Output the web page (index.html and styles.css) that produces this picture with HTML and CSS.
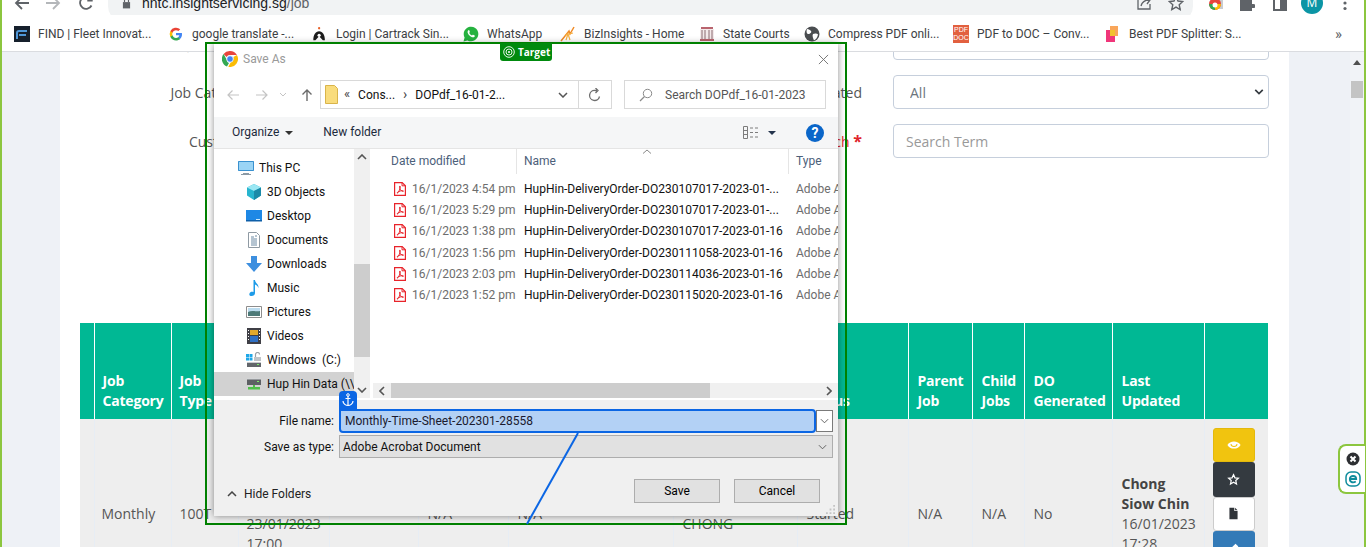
FILE: index.html
```html
<!DOCTYPE html>
<html lang="en">
<head>
    <meta charset="UTF-8">
    <title>Job</title>
    <link rel="stylesheet" href="styles.css">
</head>
<body>

    <svg width="0" height="0" class="defs">
        <symbol id="pdf" viewBox="0 0 12 14">
            <path d="M.6.6h7.6l3.2 3.2v9.6H.6z" fill="#fff" stroke="#e8232a" stroke-width="1.2"/>
            <path d="M8 .8v3h3" fill="none" stroke="#e8232a"/>
            <path d="M6 4c-.8 0-.6 2 .4 3.4C7.4 9 8.6 9.8 9.4 9.2 9.8 8.6 7.8 8.4 6 9c-1.400.5-2.800 1.600-3 1.800-.3.500.8.400 1.600-1C5.200 8.600 7 5 6 4z" fill="none" stroke="#e8232a"/>
        </symbol>
    </svg>

    <div class="app">
        <div class="toolbar">
            <div class="toolbar-inner">
                <svg class="tb-icon tb-back" viewBox="0 0 16 16"><path d="M15 8H2M8 2 2 8l6 6" fill="none" stroke="#5f6368" stroke-width="1.8"/></svg>
                <svg class="tb-icon tb-next" viewBox="0 0 16 16"><path d="M1 8h13M8 2l6 6-6 6" fill="none" stroke="#b4b7ba" stroke-width="1.8"/></svg>
                <svg class="tb-icon tb-reload" viewBox="0 0 16 16"><path d="M13.5 10.5A6 6 0 1 1 13 4.5M13.8 1v4.500H9.300" fill="none" stroke="#5f6368" stroke-width="1.8"/></svg>
                <div class="omnibox">
                    <svg class="lock" viewBox="0 0 10 12"><path d="M1 5h8v7H1z" fill="#5f6368"/><path d="M2.800 5V3a2.200 2.200 0 0 1 4.400 0v2" fill="none" stroke="#5f6368" stroke-width="1.3"/></svg>
                    <span class="url">hntc.insightservicing.sg<span class="url-path">/job</span></span>
                    <svg class="tb-icon om-share" viewBox="0 0 16 16"><path d="M8 2H2v12h12V9M5 11c1-4 4-6 8-6M10 2l4 3-3 4" fill="none" stroke="#5f6368" stroke-width="1.3"/></svg>
                    <svg class="tb-icon om-star" viewBox="0 0 16 16"><path d="m8 1.500 2 4.500 4.800.5-3.600 3.200 1 4.800L8 12.100 3.800 14.500l1-4.800L1.200 6.500 6 6z" fill="none" stroke="#5f6368" stroke-width="1.4"/></svg>
                </div>
                <svg class="tb-icon tb-ext" viewBox="0 0 16 16"><path d="M5 1h10v13H5z" fill="#c9ccd0"/><circle cx="7" cy="9" r="6" fill="#e8453c"/><path d="M7 9h6a6 6 0 0 1-6 6z" fill="#fbbc05"/><path d="M1 9h6v6a6 6 0 0 1-6-6z" fill="#34a853"/><circle cx="7" cy="10" r="2.500" fill="#fff"/></svg>
                <svg class="tb-icon tb-puzzle" viewBox="0 0 16 16"><path d="M1 5h4V3.500a2 2 0 0 1 4 0V5h4v4h1.500a2 2 0 0 1 0 4H13v3H1z" fill="#5f6368"/></svg>
                <svg class="tb-icon tb-window" viewBox="0 0 16 16"><path d="M2 1h12v14H2z" fill="none" stroke="#5f6368" stroke-width="2"/><path d="M8 1h6v14H8z" fill="#5f6368"/></svg>
                <div class="avatar">M</div>
                <svg class="tb-dots" viewBox="0 0 4 16"><circle cx="2" cy="2.500" r="1.600"/><circle cx="2" cy="8" r="1.600"/><circle cx="2" cy="13.500" r="1.600"/></svg>
            </div>
        </div>

        <div class="bookmarks">
            <div class="bm">
                <svg class="bm-icon" viewBox="0 0 16 16"><path d="M0 0h16v16H0z" fill="#16202c"/><path d="M3 13V7q0-2 2-2h8M5 9h7" fill="none" stroke="#4f97d8" stroke-width="2"/></svg>
                <span>FIND | Fleet Innovat...</span>
            </div>
            <div class="bm">
                <svg class="bm-icon" viewBox="-2 -2 20 20"><path d="M15.500 8.200c0-.6 0-1.100-.2-1.600H8v3h4.200a3.600 3.600 0 0 1-1.500 2.400v2h2.500c1.500-1.400 2.300-3.400 2.300-5.800z" fill="#4285f4"/><path d="M8 16c2.100 0 3.900-.7 5.200-1.900l-2.500-2c-.7.500-1.600.8-2.700.8-2.100 0-3.800-1.400-4.400-3.300H1v2A8 8 0 0 0 8 16z" fill="#34a853"/><path d="M3.600 9.600a4.800 4.800 0 0 1 0-3.200v-2H1a8 8 0 0 0 0 7.200z" fill="#fbbc05"/><path d="M8 3.200c1.200 0 2.200.4 3 1.200l2.300-2.300A8 8 0 0 0 1 4.400l2.600 2C4.200 4.600 5.900 3.200 8 3.200z" fill="#ea4335"/></svg>
                <span>google translate -...</span>
            </div>
            <div class="bm">
                <svg class="bm-icon" viewBox="-2 0 18 16"><circle cx="6" cy="1.500" r="1.300" fill="#e8622a"/><path d="M-.5 15C-.5 9 2 5 6 5s6.500 4 6.500 10h-2.300L6 10.500 1.800 15z" fill="#1d1d1d"/><circle cx="6" cy="9.500" r="1.800" fill="#fff"/></svg>
                <span>Login | Cartrack Sin...</span>
            </div>
            <div class="bm">
                <svg class="bm-icon" viewBox="0 0 16 16"><path d="M.5 15.500 1.600 11.500A7.300 7.300 0 1 1 4.500 14.400z" fill="#25b23f"/><path d="M5.500 4.200c-.8.500-1.200 1.600-.7 2.800.8 2 2.300 3.400 4.200 4.200 1.200.4 2.200 0 2.700-.8.300-.6.200-.9-.1-1l-1.500-.7c-.3-.1-.5 0-.6.200l-.5.600c-1.300-.5-2.200-1.400-2.800-2.700l.5-.5c.2-.2.200-.4.100-.6l-.6-1.400c-.2-.3-.4-.3-.7-.1z" fill="#fff"/></svg>
                <span>WhatsApp</span>
            </div>
            <div class="bm">
                <svg class="bm-icon" viewBox="0 0 16 16"><path d="M1 15 9 5l1 3 4-7" fill="none" stroke="#f08a24" stroke-width="1.5"/><path d="M6 14l2-6 2 6M5 9l8-2" fill="none" stroke="#f5b041" stroke-width="1.2"/></svg>
                <span>BizInsights - Home</span>
            </div>
            <div class="bm">
                <svg class="bm-icon" viewBox="0 0 16 16"><path d="M1 3h14v12H1z" fill="#f3e9ea"/><path d="M2 1h12v2H2zM1 13h14v2H1z" fill="#b9646e"/><path d="M3 4v9M6 4v9M10 4v9M13 4v9" stroke="#8a6b70"/></svg>
                <span>State Courts</span>
            </div>
            <div class="bm">
                <svg class="bm-icon" viewBox="0 0 16 16"><circle cx="8" cy="8" r="7.500" fill="#4a4d50"/><path d="M3 3c2 0 3 1 4 2S6 8 4.500 8 2 6 3 3zM9 8c2-1 4-.5 5 .5-.5 3-2 5-4 6-1-2-2-5-1-6.500z" fill="#fff"/></svg>
                <span>Compress PDF onli...</span>
            </div>
            <div class="bm">
                <div class="pdfdoc">PDF<br>DOC</div>
                <span>PDF to DOC – Conv...</span>
            </div>
            <div class="bm">
                <svg class="bm-icon" viewBox="0 0 16 16"><path d="M1 4h9v12H1z" fill="#f0367a"/><path d="M5 0h8v10H5z" fill="#f9a65a"/><path d="M5 4h5v6H5z" fill="#f2c230"/></svg>
                <span>Best PDF Splitter: S...</span>
            </div>
            <div class="bm-more">»</div>
        </div>

        <div class="viewport">
            <div class="scroll-view">
                <div class="card">
                    <div class="filters">
                        <label class="f-label">Job Status</label>
                        <div class="select-wrap"><input class="f-input" type="text"></div>
                        <label class="f-label">Job Number</label>
                        <div class="select-wrap"><input class="f-input" type="text"></div>

                        <label class="f-label">Job Category</label>
                        <div class="select-wrap">
                            <select class="f-input f-select"><option>All</option></select>
                            <svg class="chev" viewBox="0 0 12 8"><path d="M1.500 1.500 6 6l4.500-4.500" fill="none" stroke="#343a40" stroke-width="2"/></svg>
                        </div>
                        <label class="f-label">DO Generated</label>
                        <div class="select-wrap">
                            <select class="f-input f-select"><option>All</option></select>
                            <svg class="chev" viewBox="0 0 12 8"><path d="M1.500 1.500 6 6l4.500-4.500" fill="none" stroke="#343a40" stroke-width="2"/></svg>
                        </div>

                        <label class="f-label">Customer</label>
                        <div class="select-wrap"><input class="f-input" type="text"></div>
                        <label class="f-label f-required">Search <b>*</b></label>
                        <div class="select-wrap"><input class="f-input" type="text" placeholder="Search Term"></div>
                    </div>

                    <table class="jobs">
                        <colgroup>
                            <col class="c14"><col class="c77"><col class="c67"><col class="c91"><col class="c89"><col class="c90"><col class="c165"><col class="c124"><col class="c111"><col class="c64"><col class="c52"><col class="c88"><col class="c92"><col class="c64">
                        </colgroup>
                        <thead>
                            <tr>
                                <th></th>
                                <th>Job Category</th>
                                <th>Job Type</th>
                                <th>Due Date</th>
                                <th>Customer</th>
                                <th>Job No</th>
                                <th>DO No</th>
                                <th>Driver</th>
                                <th>Status</th>
                                <th>Parent Job</th>
                                <th>Child Jobs</th>
                                <th>DO Generated</th>
                                <th>Last Updated</th>
                                <th></th>
                            </tr>
                        </thead>
                        <tbody>
                            <tr>
                                <td></td>
                                <td>Monthly</td>
                                <td>100T</td>
                                <td>16/01/2023<br>08:00<br>23/01/2023<br>17:00</td>
                                <td></td>
                                <td>N/A</td>
                                <td>N/A</td>
                                <td>SIOW CHIN<br>CHONG</td>
                                <td>Started</td>
                                <td>N/A</td>
                                <td>N/A</td>
                                <td>No</td>
                                <td><b>Chong Siow Chin</b><br>16/01/2023<br>17:28</td>
                                <td class="actions">
                                    <button class="act act-view"><svg viewBox="0 0 16 16"><path d="M.5 8C3 2.500 13 2.500 15.500 8 13 13.500 3 13.500.5 8z" fill="#fff"/><path d="M4.500 7c.5 3.500 6.500 3.500 7 0" fill="none" stroke="#f1c40f" stroke-width="1.2"/></svg></button>
                                    <button class="act act-star"><svg viewBox="0 0 16 16"><path d="m8 2 1.800 4 4.200.4-3.200 2.900.9 4.200L8 11.300l-3.700 2.200.9-4.200L2 6.400 6.200 6z" fill="none" stroke="#fff" stroke-width="1.5"/></svg></button>
                                    <button class="act act-file"><svg viewBox="0 0 16 16"><path d="M3 1h6v4h4v10H3z" fill="#2f3338"/><path d="M10 1l3 3h-3z" fill="#2f3338"/></svg></button>
                                    <button class="act act-edit"><svg viewBox="0 0 16 16"><path d="m10.500 2 3.500 3.500L6 13.500l-4 .5.500-4z" fill="#fff"/></svg></button>
                                    <button class="act act-edit"></button>
                                </td>
                            </tr>
                        </tbody>
                    </table>
                </div>
            </div>
            <div class="scrollbar">
                <svg class="sb-up" viewBox="0 0 8 5"><path d="M4 0l4 5H0z" fill="#505050"/></svg>
                <div class="sb-thumb"></div>
            </div>
        </div>
    </div>

    <!-- save as dialog, sits on top of the page -->
    <div class="dialog">
        <div class="dlg-title">
            <svg class="chrome-logo" viewBox="0 0 16 16"><path d="M8 0a8 8 0 0 1 6.900 4H8a4 4 0 0 0-3.500 2L1.600 3A8 8 0 0 1 8 0z" fill="#e8453c"/><path d="M1.600 3l3 5.400A3.800 3.800 0 0 0 7 11.900L5 15.500A8 8 0 0 1 1.600 3z" fill="#34a853"/><path d="M14.900 4A8 8 0 0 1 6.300 15.800l3-5.500A4 4 0 0 0 11.400 6l3.500-2z" fill="#fbbc05"/><circle cx="8" cy="8" r="3.300" fill="#4285f4" stroke="#fff" stroke-width=".8"/></svg>
            <span class="dlg-title-text">Save As</span>
            <svg class="dlg-close" viewBox="0 0 12 12"><path d="M1 1l10 10M11 1 1 11" stroke="#6f6f6f" fill="none"/></svg>
        </div>

        <div class="dlg-nav">
            <svg class="nav-btn" viewBox="0 0 14 14"><path d="M13 7H2M6.500 2.500 2 7l4.500 4.500" fill="none" stroke="#c4c4c4" stroke-width="1.2"/></svg>
            <svg class="nav-btn" viewBox="0 0 14 14"><path d="M1 7h11M7.500 2.500 12 7l-4.500 4.500" fill="none" stroke="#c4c4c4" stroke-width="1.2"/></svg>
            <svg class="nav-drop" viewBox="0 0 8 5"><path d="M1 1l3 3 3-3" fill="none" stroke="#c4c4c4"/></svg>
            <svg class="nav-btn nav-up" viewBox="0 0 14 14"><path d="M7 13V2M2.500 6.500 7 2l4.500 4.500" fill="none" stroke="#6b6b6b" stroke-width="1.4"/></svg>
            <div class="crumbs">
                <svg class="crumb-folder" viewBox="0 0 13 19"><path d="M.5.500h9l3 3v15H.5z" fill="#f9dc7c" stroke="#d9b44a"/></svg>
                <span class="crumb-sep crumb-back">«</span>
                <span>Cons...</span>
                <span class="crumb-sep crumb-arrow">›</span>
                <span>DOPdf_16-01-2...</span>
                <svg class="crumb-chev" viewBox="0 0 10 6"><path d="M1 1l4 4 4-4" fill="none" stroke="#555" stroke-width="1.5"/></svg>
            </div>
            <div class="refresh">
                <svg viewBox="0 0 14 14" width="14" height="14"><path d="M11.500 8.500A5 5 0 1 1 7 2.500h2M7.500 0 10 2.500 7.500 5" fill="none" stroke="#6e6e6e" stroke-width="1.3"/></svg>
            </div>
            <div class="search">
                <svg viewBox="0 0 14 14" width="14" height="14"><circle cx="8.500" cy="5.500" r="4.200" fill="none" stroke="#8a8a8a"/><path d="M5.500 8.500 1 13" stroke="#8a8a8a" stroke-width="1.2"/></svg>
                <span>Search DOPdf_16-01-2023</span>
            </div>
        </div>

        <div class="dlg-tools">
            <span class="tool-organize">Organize</span>
            <svg class="caret" viewBox="0 0 8 4"><path d="M0 0h8L4 4z" fill="#333"/></svg>
            <span class="tool-new">New folder</span>
            <svg class="view-icon" viewBox="0 0 16 13"><path d="M.5.500h4v12h-4zM.5 4.500h4M.5 8.500h4" fill="none" stroke="#7c7c7c"/><path d="M7 2h3M12 2h3M7 6.500h3M12 6.500h3M7 11h3M12 11h3" stroke="#7c7c7c"/></svg>
            <svg class="caret caret-view" viewBox="0 0 8 4"><path d="M0 0h8L4 4z" fill="#24344d"/></svg>
            <div class="help">?</div>
        </div>

        <div class="dlg-browser">
            <div class="tree">
                <div class="tree-row tree-root">
                    <svg viewBox="0 0 16 16"><path d="M0 1h16v10H0z" fill="#9ad4f5"/><path d="M.5 1.500h15v9H.5z" fill="none" stroke="#3a91cf"/><path d="M5 13h6v1H5zM3 14h10v1H3z" fill="#8c9aa5"/></svg>
                    <span>This PC</span>
                </div>
                <div class="tree-row">
                    <svg viewBox="0 0 16 16"><path d="M8 0l7 3.500v8L8 16l-7-4.500v-8z" fill="#27b5cf"/><path d="M1 3.500 8 7l7-3.500L8 0z" fill="#9be7f3"/><path d="M8 7v9l7-4.500v-8z" fill="#1b8aa8"/></svg>
                    <span>3D Objects</span>
                </div>
                <div class="tree-row">
                    <svg viewBox="0 0 16 16"><path d="M0 2h16v11H0z" fill="#1e88e5"/><path d="M0 12h16v1.500H0z" fill="#0e5fa8"/><path d="M10 11h4v1h-4z" fill="#cde9fb"/></svg>
                    <span>Desktop</span>
                </div>
                <div class="tree-row">
                    <svg viewBox="0 0 16 16"><path d="M2.500.500h8l3 3v12h-11z" fill="#fff" stroke="#8f9aa3"/><path d="M5 5h3M9 4h2M5 7h6M5 9h6M5 11h6M5 13h6" stroke="#6a89a3"/></svg>
                    <span>Documents</span>
                </div>
                <div class="tree-row">
                    <svg viewBox="0 0 16 16"><path d="M5 0h6v7h5l-8 9-8-9h5z" fill="#3d8fdf"/></svg>
                    <span>Downloads</span>
                </div>
                <div class="tree-row">
                    <svg viewBox="0 0 16 16"><path d="M7.500 0h1.500c0 3 4 4 3.500 8-.7-2-2-3-3.500-3.500V13c0 2-1.500 3-3.500 3S3 15 3.500 13.500 5.500 11.500 7.500 12z" fill="#1e9be8"/></svg>
                    <span>Music</span>
                </div>
                <div class="tree-row">
                    <svg viewBox="0 0 16 16"><path d="M.5 2.500h15v11H.5z" fill="#fff" stroke="#8d8d8d"/><path d="M2 4h12v4H2z" fill="#bcdcef"/><path d="M2 8c4-2 8 0 12-1v5H2z" fill="#4d7a78"/></svg>
                    <span>Pictures</span>
                </div>
                <div class="tree-row">
                    <svg viewBox="0 0 16 16"><path d="M1 0h14v16H1z" fill="#3f3f46"/><path d="M4 2h8v5H4z" fill="#e3a92c"/><path d="M4 8h8v6H4z" fill="#3070c4"/><path d="M2 2h1v1H2zM2 5h1v1H2zM2 8h1v1H2zM2 11h1v1H2zM13 2h1v1h-1zM13 5h1v1h-1zM13 8h1v1h-1zM13 11h1v1h-1z" fill="#fff"/></svg>
                    <span>Videos</span>
                </div>
                <div class="tree-row">
                    <svg viewBox="0 0 16 16"><path d="M0 2h3v3H0zM3.500 2h3v3h-3zM0 5.500h3v3H0zM3.500 5.500h3v3h-3z" fill="#1ea7e8"/><path d="M8 5h7v4H8z" fill="#bfc4c8"/><path d="M9.500 5V2.500a2 2 0 0 1 4 0" fill="none" stroke="#9aa0a6" stroke-width="1.2"/><path d="M1 10h14v5H1z" fill="#62666b"/><path d="M1 10h14v1H1z" fill="#c9cccf"/><path d="M11 12h2v1h-2z" fill="#7cf06a"/></svg>
                    <span>Windows&nbsp; (C:)</span>
                </div>
                <div class="tree-row tree-selected">
                    <svg viewBox="0 0 16 16"><path d="M1 2h14v7H1z" fill="#5d6064"/><path d="M1 2h14v1.500H1z" fill="#d3d5d7"/><path d="M11 5h2v1h-2z" fill="#7cf06a"/><path d="M7 9h2v2H7zM2 11h12v2.500H2z" fill="#4fbf4a"/></svg>
                    <span>Hup Hin Data (\\</span>
                </div>
            </div>
            <div class="tree-scroll">
                <svg class="ts-arrow" viewBox="0 0 10 6"><path d="M1 5l4-4 4 4" fill="none" stroke="#555" stroke-width="1.6"/></svg>
                <div class="ts-thumb"></div>
                <svg class="ts-arrow ts-down" viewBox="0 0 10 6"><path d="M1 1l4 4 4-4" fill="none" stroke="#555" stroke-width="1.6"/></svg>
            </div>
            <div class="files">
                <div class="files-head">
                    <div class="fh fh-date">Date modified</div>
                    <div class="fh fh-name">Name
                        <svg class="sort" viewBox="0 0 10 5"><path d="M1 4.500 5 1l4 3.500" fill="none" stroke="#8a8a8a"/></svg>
                    </div>
                    <div class="fh fh-type">Type</div>
                </div>
                <div class="files-body">
                    <div class="file-row"><svg class="pdf-ic"><use href="#pdf"/></svg><span class="file-date">16/1/2023 4:54 pm</span><span class="file-name">HupHin-DeliveryOrder-DO230107017-2023-01-...</span><span class="file-type">Adobe Acrobat</span></div>
                    <div class="file-row"><svg class="pdf-ic"><use href="#pdf"/></svg><span class="file-date">16/1/2023 5:29 pm</span><span class="file-name">HupHin-DeliveryOrder-DO230107017-2023-01-...</span><span class="file-type">Adobe Acrobat</span></div>
                    <div class="file-row"><svg class="pdf-ic"><use href="#pdf"/></svg><span class="file-date">16/1/2023 1:38 pm</span><span class="file-name">HupHin-DeliveryOrder-DO230107017-2023-01-16</span><span class="file-type">Adobe Acrobat</span></div>
                    <div class="file-row"><svg class="pdf-ic"><use href="#pdf"/></svg><span class="file-date">16/1/2023 1:56 pm</span><span class="file-name">HupHin-DeliveryOrder-DO230111058-2023-01-16</span><span class="file-type">Adobe Acrobat</span></div>
                    <div class="file-row"><svg class="pdf-ic"><use href="#pdf"/></svg><span class="file-date">16/1/2023 2:03 pm</span><span class="file-name">HupHin-DeliveryOrder-DO230114036-2023-01-16</span><span class="file-type">Adobe Acrobat</span></div>
                    <div class="file-row"><svg class="pdf-ic"><use href="#pdf"/></svg><span class="file-date">16/1/2023 1:52 pm</span><span class="file-name">HupHin-DeliveryOrder-DO230115020-2023-01-16</span><span class="file-type">Adobe Acrobat</span></div>
                </div>
                <div class="hscroll">
                    <svg class="hs-arrow" viewBox="0 0 6 10"><path d="M5 1 1 5l4 4" fill="none" stroke="#555" stroke-width="1.6"/></svg>
                    <div class="hs-thumb"></div>
                    <svg class="hs-arrow hs-right" viewBox="0 0 6 10"><path d="M1 1l4 4-4 4" fill="none" stroke="#555" stroke-width="1.6"/></svg>
                </div>
            </div>
        </div>

        <div class="dlg-lower">
            <div class="save-fields">
                <label class="sf-label">File name:</label>
                <div class="sf-name">
                    <div class="sf-input">Monthly-Time-Sheet-202301-28558</div>
                    <div class="sf-drop"><svg viewBox="0 0 10 6"><path d="M1 1l4 4 4-4" fill="none" stroke="#555"/></svg></div>
                    <div class="anchor">
                        <svg viewBox="0 0 12 14" width="12" height="14"><circle cx="6" cy="2" r="1.300" fill="none" stroke="#fff"/><path d="M6 3v10M3.500 5.500h5M1 8c0 3 3 4.500 5 4.500S11 11 11 8" fill="none" stroke="#fff" stroke-width="1.2"/></svg>
                    </div>
                </div>
                <label class="sf-label">Save as type:</label>
                <div class="sf-type">
                    <span>Adobe Acrobat Document</span>
                    <svg viewBox="0 0 10 6"><path d="M1 1l4 4 4-4" fill="none" stroke="#555"/></svg>
                </div>
            </div>
            <div class="dlg-foot">
                <svg class="hide-chev" viewBox="0 0 10 6"><path d="M1 5l4-4 4 4" fill="none" stroke="#444" stroke-width="1.5"/></svg>
                <span class="hide-text">Hide Folders</span>
                <button class="dlg-btn">Save</button>
                <button class="dlg-btn">Cancel</button>
            </div>
            <svg class="grip" viewBox="0 0 10 10"><path d="M8 0h2v2H8zM4 4h2v2H4zM8 4h2v2H8zM0 8h2v2H0zM4 8h2v2H4zM8 8h2v2H8z" fill="#c4c4c4"/></svg>
        </div>
    </div>

    <!-- recorder overlay: target box and link line -->
    <div class="target-box">
        <div class="target-tag">
            <svg viewBox="0 0 12 12" width="12" height="12"><circle cx="6" cy="6" r="5.300" fill="none" stroke="#fff" stroke-width=".9"/><circle cx="6" cy="6" r="3" fill="none" stroke="#fff" stroke-width=".9"/><circle cx="6" cy="6" r="1" fill="#fff"/></svg>
            <span>Target</span>
        </div>
    </div>
    <svg class="link-line" viewBox="0 0 62 96"><path d="M58 1 7 92" stroke="#0b66e4" stroke-width="2" fill="none"/></svg>

    <div class="eset">
        <svg viewBox="0 0 14 14" width="14" height="14"><circle cx="7" cy="7" r="6.500" fill="#2d2f32"/><path d="M4.500 4.500l5 5M9.500 4.500l-5 5" stroke="#fff" stroke-width="2"/></svg>
        <svg viewBox="0 0 16 16" width="16" height="16"><rect x="1" y="1" width="14" height="14" rx="5" fill="#fff" stroke="#0f8c9c" stroke-width="1.5"/><path d="M4.800 8h6.400c0-4-6.400-4-6.400 0s4 3.800 6 2.600" fill="none" stroke="#0f8c9c" stroke-width="1.8"/></svg>
    </div>

</body>
</html>
```

FILE: styles.css
```css
* {
    box-sizing: border-box;
}

body {
    margin: 0;
    position: relative;
    width: 1366px;
    height: 547px;
    overflow: hidden;
    font-family: "Open Sans", sans-serif;
    font-size: 14px;
    line-height: 20px;
    color: #555;
    background: #fff;
}

.defs {
    position: absolute;
}

.app {
    height: 547px;
    display: flex;
    flex-direction: column;
    border-left: 2px solid #8cc63f;
    border-right: 2px solid #8cc63f;
}

/* browser top bar, cropped by the top of the window */
.toolbar {
    height: 15px;
    flex: none;
    overflow: hidden;
    background: #fff;
}

.toolbar-inner {
    height: 38px;
    margin-top: -16px;
    display: flex;
    align-items: center;
    padding-left: 12px;
}

.tb-icon {
    width: 16px;
    height: 16px;
    flex: none;
}

.tb-next { margin-left: 15px; }
.tb-reload { margin-left: 17px; }

.omnibox {
    width: 1085px;
    height: 38px;
    margin-left: 14px;
    padding-left: 14px;
    border-radius: 16px;
    background: #f1f3f4;
    display: flex;
    align-items: center;
}

.lock {
    width: 9px;
    height: 12px;
    flex: none;
}

.url {
    margin-left: 11px;
    font-family: "Liberation Sans", sans-serif;
    font-size: 14px;
    color: #202124;
}

.url-path { color: #5f6368; }

.om-share { margin-left: auto; }
.om-star { margin: 0 9px 0 16px; }

.tb-ext { margin-left: 15px; }
.tb-puzzle { margin-left: 15px; }
.tb-window { margin-left: 17px; }

.avatar {
    width: 22px;
    height: 22px;
    margin-left: 13px;
    border-radius: 50%;
    background: #0b95a5;
    color: #fff;
    font-size: 12px;
    line-height: 22px;
    text-align: center;
    flex: none;
}

.tb-dots {
    width: 4px;
    height: 16px;
    margin-left: 20px;
    fill: #5f6368;
}

.bookmarks {
    height: 37px;
    flex: none;
    padding: 2px 0 0 12px;
    display: grid;
    grid-template-columns: 154px 144px 151px 97px 139px 105px 149px 152px 230px 20px;
    align-items: center;
    background: #fff;
    border-bottom: 1px solid #dadce0;
    font-family: Roboto, sans-serif;
    font-size: 12px;
    color: #3c4043;
}

.bm {
    display: flex;
    align-items: center;
    gap: 8px;
    white-space: nowrap;
    overflow: hidden;
}

.bm-icon {
    width: 16px;
    height: 16px;
    flex: none;
}

.pdfdoc {
    width: 16px;
    height: 18px;
    flex: none;
    background: #e2603f;
    color: #fff;
    font-family: "Liberation Sans", sans-serif;
    font-size: 7px;
    line-height: 8px;
    text-align: center;
    padding-top: 1px;
}

.bm-more {
    font-size: 15px;
    color: #5f6368;
}

.viewport {
    flex: 1;
    min-height: 0;
    display: flex;
}

.scroll-view {
    flex: 1;
    overflow: hidden;
    background: #eef1f6;
}

.scrollbar {
    width: 14px;
    flex: none;
    background: #f1f3f7;
    display: flex;
    flex-direction: column;
    align-items: center;
}

.sb-up {
    width: 8px;
    height: 5px;
    margin-top: 8px;
}

.sb-thumb {
    width: 12px;
    height: 17px;
    margin-top: 16px;
    background: #c4c4c4;
}

.card {
    width: 1229px;
    height: 600px;
    margin-left: 58px;
    margin-top: -26px;
    padding: 0 20px;
    background: #fff;
}

.filters {
    display: grid;
    grid-template-columns: 173px 378px 169px 376px;
    column-gap: 31px;
    row-gap: 15px;
    align-items: center;
}

.f-label {
    padding-top: 1px;
    text-align: right;
    color: #555;
}

.f-required { color: #e0242c; }

.f-required b {
    font-size: 16px;
    font-weight: 700;
}

.select-wrap {
    position: relative;
}

.f-input {
    display: block;
    width: 100%;
    height: 34px;
    padding: 0 12px;
    border: 1px solid #c6cfdc;
    border-radius: 4px;
    background: #fff;
    font-family: inherit;
    font-size: 14px;
    color: #6c757d;
    appearance: none;
}

.f-select {
    padding-left: 16px;
}

.f-input::placeholder {
    color: #999;
}

.chev {
    position: absolute;
    right: 5px;
    top: 13px;
    width: 10px;
    height: 8px;
}

.jobs {
    width: 1188px;
    margin-top: 165px;
    table-layout: fixed;
    border-collapse: collapse;
}

.c14 { width: 14px; }
.c77 { width: 77px; }
.c67 { width: 67px; }
.c91 { width: 91px; }
.c89 { width: 89px; }
.c90 { width: 90px; }
.c165 { width: 165px; }
.c124 { width: 124px; }
.c111 { width: 111px; }
.c64 { width: 64px; }
.c52 { width: 52px; }
.c88 { width: 88px; }
.c92 { width: 92px; }

.jobs th {
    height: 96px;
    padding: 0 9px 8px;
    background: #00b894;
    border-left: 1px solid #fff;
    color: #fff;
    font-weight: 700;
    letter-spacing: -0.2px;
    text-align: left;
    vertical-align: bottom;
}

.jobs th:first-child {
    border-left: 0;
}

.jobs td {
    height: 190px;
    padding: 9px;
    background: #eee;
    border-left: 1px solid #e7edf4;
    vertical-align: middle;
}

.jobs td:first-child {
    border-left: 0;
}

.jobs th:nth-child(2),
.jobs th:nth-child(3) {
    padding-left: 8px;
}

.jobs td:nth-child(2) {
    padding-left: 7px;
}

.jobs td:nth-child(3),
.jobs td:nth-child(4) {
    padding-left: 8px;
}

.jobs td b {
    color: #444;
}

.jobs .actions {
    vertical-align: top;
    padding: 9px 0 0 8px;
}

.act {
    display: flex;
    align-items: center;
    justify-content: center;
    width: 42px;
    height: 34.4px;
    padding: 0;
    border: 1px solid transparent;
    border-radius: 3px;
}

.act svg {
    width: 13px;
    height: 13px;
}

.act-view svg {
    width: 14px;
    height: 14px;
}

.act-view { background: #f1c40f; border-color: #e4b90c; }
.act-star { background: #343a40; }
.act-file { background: #fff; border-color: #ccc; }
.act-edit { background: #337ab7; }

/* save as dialog */
.dialog {
    position: absolute;
    left: 214px;
    top: 44px;
    width: 624px;
    height: 472px;
    display: flex;
    flex-direction: column;
    background: #fff;
    box-shadow: 0 0 7px rgba(0, 0, 0, 0.45);
    font-family: Roboto, sans-serif;
    font-size: 12px;
    line-height: 16px;
    color: #111;
}

.dlg-title {
    height: 36px;
    flex: none;
    display: flex;
    align-items: center;
    padding: 0 9px 6px 8px;
}

.chrome-logo {
    width: 16px;
    height: 16px;
}

.dlg-title-text {
    margin-left: 5px;
    color: #9a9a9a;
}

.dlg-close {
    width: 11px;
    height: 11px;
    margin-left: auto;
}

.dlg-nav {
    height: 37px;
    flex: none;
    display: flex;
    align-items: flex-start;
    padding-left: 12px;
}

.nav-btn {
    width: 14px;
    height: 14px;
    margin-top: 8px;
    margin-right: 15px;
    flex: none;
}

.nav-drop {
    width: 8px;
    height: 5px;
    margin: 12px 13px 0 -5px;
    flex: none;
}

.nav-up {
    margin-right: 6px;
}

.crumbs {
    width: 259px;
    height: 29px;
    display: flex;
    align-items: center;
    padding-left: 4px;
    border: 1px solid #d9d9d9;
    flex: none;
}

.crumb-folder {
    width: 13px;
    height: 19px;
    flex: none;
}

.crumb-sep { color: #444; }
.crumb-back { margin: -2px 8px 0 6px; font-size: 13px; }
.crumb-arrow { margin: -2px 8px 0 8px; font-size: 14px; }

.crumb-chev {
    width: 10px;
    height: 6px;
    margin-left: auto;
    margin-right: 10px;
}

.refresh {
    width: 33px;
    height: 29px;
    display: flex;
    align-items: center;
    justify-content: center;
    border: 1px solid #d9d9d9;
    border-left: 0;
    flex: none;
}

.search {
    width: 202px;
    height: 29px;
    margin-left: 12px;
    padding-left: 14px;
    display: flex;
    align-items: center;
    gap: 12px;
    border: 1px solid #d9d9d9;
    color: #555;
    flex: none;
}

.dlg-tools {
    height: 32px;
    flex: none;
    display: flex;
    align-items: center;
    padding-left: 18px;
    background: #f5f6f7;
    border-bottom: 1px solid #e5e5e5;
    color: #1c2a3c;
}

.tool-organize,
.tool-new {
    margin-top: -2px;
}

.caret {
    width: 8px;
    height: 4px;
    margin-left: 6px;
}

.tool-new {
    margin-left: 30px;
}

.view-icon {
    width: 16px;
    height: 13px;
    margin-left: auto;
}

.caret-view {
    margin-left: 9px;
}

.help {
    width: 18px;
    height: 18px;
    margin: 0 14px 0 30px;
    border-radius: 50%;
    background: #0a66c9;
    color: #fff;
    font-weight: 700;
    font-size: 14px;
    line-height: 18px;
    text-align: center;
}

.dlg-browser {
    height: 251px;
    flex: none;
    display: flex;
}

.tree {
    width: 140px;
    flex: none;
    padding-top: 7px;
    overflow: hidden;
}

.tree-row {
    height: 24px;
    padding-left: 32px;
    display: flex;
    align-items: center;
    gap: 5px;
    white-space: nowrap;
    color: #111;
}

.tree-row svg {
    width: 16px;
    height: 16px;
    flex: none;
}

.tree-root {
    padding-left: 24px;
}

.tree-selected {
    background: #d2d2d2;
}

.tree-scroll {
    width: 16px;
    height: 249px;
    flex: none;
    display: flex;
    flex-direction: column;
    align-items: center;
    background: #f0f0f0;
}

.ts-arrow {
    width: 10px;
    height: 6px;
    margin-top: 5px;
    flex: none;
}

.ts-thumb {
    width: 16px;
    height: 93px;
    margin-top: 104px;
    flex: none;
    background: #cdcdcd;
}

.ts-down {
    margin-top: auto;
    margin-bottom: 5px;
}

.files {
    flex: 1;
    min-width: 0;
    margin-left: 1px;
    display: flex;
    flex-direction: column;
    overflow: hidden;
}

.files-head {
    height: 25px;
    flex: none;
    display: grid;
    grid-template-columns: 146px 272px 100px;
    color: #4c607a;
}

.fh {
    position: relative;
    padding-left: 7px;
    line-height: 25px;
    border-right: 1px solid #e5e5e5;
}

.fh-date { padding-left: 20px; }
.fh-type { border-right: 0; }

.sort {
    position: absolute;
    left: 125px;
    top: 0;
    width: 10px;
    height: 5px;
}

.files-body {
    flex: 1;
    padding-top: 4.4px;
}

.file-row {
    height: 21.2px;
    display: grid;
    grid-template-columns: 23px 18px 112px 272px 80px;
    align-items: center;
    white-space: nowrap;
}

.pdf-ic {
    grid-column: 2;
    width: 12px;
    height: 14px;
}

.file-date,
.file-type {
    color: #6d6d6d;
}

.hscroll {
    height: 15px;
    flex: none;
    margin: 0 0 2px 2px;
    display: flex;
    align-items: center;
    background: #f0f0f0;
}

.hs-arrow {
    width: 6px;
    height: 10px;
    margin-left: 6px;
    flex: none;
}

.hs-thumb {
    width: 319px;
    height: 15px;
    margin-left: 6px;
    flex: none;
    background: #cdcdcd;
}

.hs-right {
    margin-left: auto;
    margin-right: 6px;
}

.dlg-lower {
    position: relative;
    flex: 1;
    padding: 9px 5px 0 0;
    background: #f0f0f0;
}

.save-fields {
    display: grid;
    grid-template-columns: 120px 1fr;
    column-gap: 5px;
    row-gap: 2px;
    align-items: center;
}

.sf-label {
    text-align: right;
}

.sf-name {
    position: relative;
    height: 24px;
    display: flex;
}

.sf-input {
    flex: 1;
    padding-left: 4px;
    line-height: 20px;
    border: 2px solid #0b66e4;
    border-radius: 0 4px 4px 4px;
    background: #b3d1f5;
    color: #1a1a2e;
}

.sf-drop {
    width: 17px;
    height: 22px;
    margin-top: 1px;
    display: flex;
    align-items: center;
    justify-content: center;
    background: #fff;
    border: 1px solid #7a7a7a;
}

.sf-drop svg,
.sf-type svg {
    width: 9px;
    height: 6px;
}

.anchor {
    position: absolute;
    left: 0;
    top: -18px;
    width: 18px;
    height: 18px;
    display: flex;
    align-items: center;
    justify-content: center;
    background: #0b66e4;
    border-radius: 4px 4px 0 0;
}

.sf-type {
    height: 23px;
    padding: 0 5px 0 3px;
    display: flex;
    align-items: center;
    justify-content: space-between;
    background: #e1e1e1;
    border: 1px solid #adadad;
}

.dlg-foot {
    height: 24px;
    margin-top: 21px;
    padding: 0 13px 0 13px;
    display: flex;
    align-items: center;
}

.hide-chev {
    width: 10px;
    height: 6px;
    margin-top: 6px;
}

.hide-text {
    margin-left: 7px;
    margin-top: 6px;
    color: #222;
}

.dlg-btn {
    width: 86px;
    height: 24px;
    padding: 0;
    background: #e1e1e1;
    border: 1px solid #adadad;
    font-family: inherit;
    font-size: 12px;
    color: #000;
}

.hide-text + .dlg-btn {
    margin-left: auto;
}

.dlg-btn + .dlg-btn {
    margin-left: 14px;
}

.grip {
    position: absolute;
    right: 3px;
    bottom: 2px;
    width: 9px;
    height: 9px;
}

/* recorder overlay */
.target-box {
    position: absolute;
    left: 205px;
    top: 42px;
    width: 642px;
    height: 483px;
    border: 2px solid #008000;
}

.target-tag {
    position: absolute;
    left: 293px;
    top: -1px;
    width: 52px;
    height: 18px;
    display: flex;
    align-items: center;
    gap: 3px;
    padding-left: 3px;
    background: #008a0e;
    border-radius: 0 0 3px 3px;
    color: #fff;
    font-size: 10px;
    font-weight: 700;
    line-height: 18px;
}

.link-line {
    position: absolute;
    left: 520px;
    top: 432px;
    width: 62px;
    height: 96px;
}

.eset {
    position: absolute;
    right: 1px;
    top: 444px;
    width: 27px;
    height: 50px;
    padding-top: 6px;
    display: flex;
    flex-direction: column;
    align-items: center;
    gap: 5px;
    background: #fff;
    border: 2px solid #8cc63f;
    border-right: 0;
    border-radius: 8px 0 0 8px;
}
```
